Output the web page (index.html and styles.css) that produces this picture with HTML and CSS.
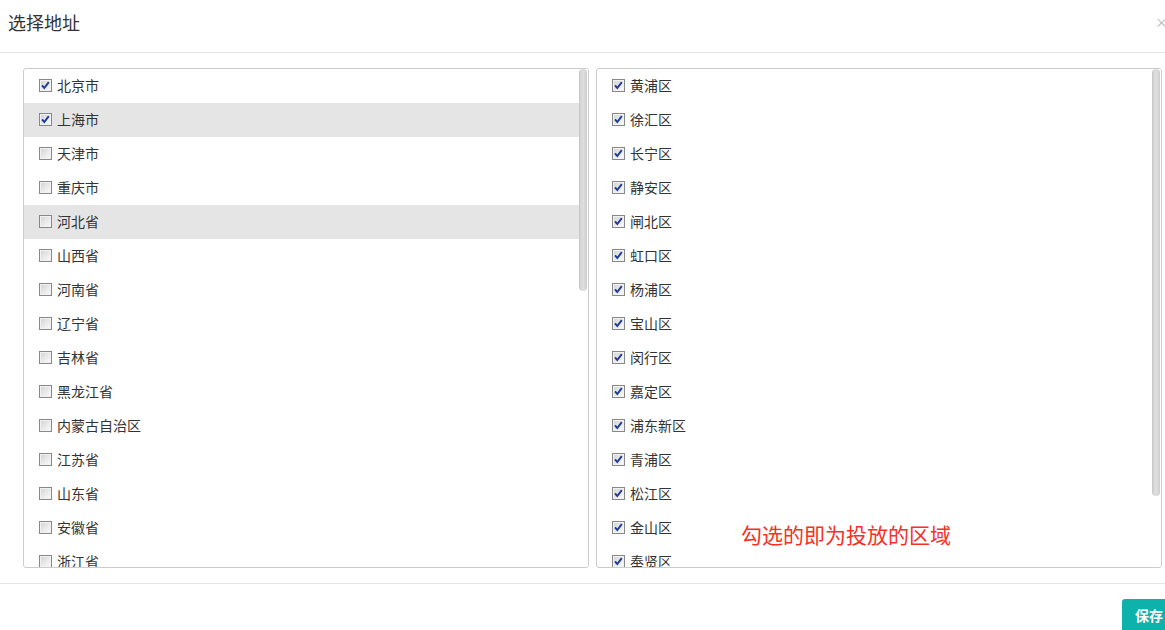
FILE: index.html
```html
<!DOCTYPE html>
<html lang="zh-CN">
<head>
<meta charset="utf-8">
<title>选择地址</title>
<link rel="stylesheet" href="styles.css">
</head>
<body>
<div class="modal">
  <div class="modal-header">
    <h4 class="modal-title">选择地址</h4>
    <span class="close">×</span>
  </div>
  <div class="modal-body">
    <div class="panel">
      <ul class="list">
        <li class="item"><span class="cb checked"></span>北京市</li>
        <li class="item active"><span class="cb checked"></span>上海市</li>
        <li class="item"><span class="cb"></span>天津市</li>
        <li class="item"><span class="cb"></span>重庆市</li>
        <li class="item active"><span class="cb"></span>河北省</li>
        <li class="item"><span class="cb"></span>山西省</li>
        <li class="item"><span class="cb"></span>河南省</li>
        <li class="item"><span class="cb"></span>辽宁省</li>
        <li class="item"><span class="cb"></span>吉林省</li>
        <li class="item"><span class="cb"></span>黑龙江省</li>
        <li class="item"><span class="cb"></span>内蒙古自治区</li>
        <li class="item"><span class="cb"></span>江苏省</li>
        <li class="item"><span class="cb"></span>山东省</li>
        <li class="item"><span class="cb"></span>安徽省</li>
        <li class="item"><span class="cb"></span>浙江省</li>
        <li class="item"><span class="cb"></span>福建省</li>
        <li class="item"><span class="cb"></span>湖北省</li>
        <li class="item"><span class="cb"></span>湖南省</li>
        <li class="item"><span class="cb"></span>广东省</li>
        <li class="item"><span class="cb"></span>广西壮族自治区</li>
      </ul>
      <div class="track"><div class="thumb thumb-left"></div></div>
    </div>
    <div class="panel">
      <ul class="list">
        <li class="item"><span class="cb checked"></span>黄浦区</li>
        <li class="item"><span class="cb checked"></span>徐汇区</li>
        <li class="item"><span class="cb checked"></span>长宁区</li>
        <li class="item"><span class="cb checked"></span>静安区</li>
        <li class="item"><span class="cb checked"></span>闸北区</li>
        <li class="item"><span class="cb checked"></span>虹口区</li>
        <li class="item"><span class="cb checked"></span>杨浦区</li>
        <li class="item"><span class="cb checked"></span>宝山区</li>
        <li class="item"><span class="cb checked"></span>闵行区</li>
        <li class="item"><span class="cb checked"></span>嘉定区</li>
        <li class="item"><span class="cb checked"></span>浦东新区</li>
        <li class="item"><span class="cb checked"></span>青浦区</li>
        <li class="item"><span class="cb checked"></span>松江区</li>
        <li class="item"><span class="cb checked"></span>金山区</li>
        <li class="item"><span class="cb checked"></span>奉贤区</li>
        <li class="item"><span class="cb checked"></span>崇明县</li>
      </ul>
      <div class="track"><div class="thumb thumb-right"></div></div>
      <p class="hint">勾选的即为投放的区域</p>
    </div>
  </div>
  <div class="modal-footer">
    <button class="btn-save">保存</button>
  </div>
</div>
</body>
</html>
```

FILE: styles.css
```css
html, body {
  margin: 0;
  padding: 0;
  overflow: hidden;
  background: #fff;
}

body {
  font-family: "Noto Sans CJK SC", "Noto Sans", "Liberation Sans", sans-serif;
  color: #333;
}

.modal {
  width: 1200px;
  background: #fff;
}

.modal-header {
  height: 52px;
  border-bottom: 1px solid #e5e5e5;
  display: flex;
  align-items: center;
  padding: 0 0 0 8px;
}

.modal-title {
  margin: 0;
  font-size: 18px;
  font-weight: normal;
  color: #333;
  line-height: 20px;
  position: relative;
  top: -4px;
}

.close {
  margin-left: auto;
  margin-right: 32px;
  font-size: 13px;
  color: #b5b5b5;
  line-height: 1;
  position: relative;
  top: -5px;
}

.modal-body {
  display: flex;
  gap: 7px;
  padding: 15px 0 15px 23px;
  border-bottom: 1px solid #e5e5e5;
}

.panel {
  position: relative;
  display: flex;
  width: 566px;
  height: 500px;
  box-sizing: border-box;
  border: 1px solid #ccc;
  border-radius: 3px;
  overflow: hidden;
}

.list {
  flex: 1;
  list-style: none;
  margin: 0;
  padding: 0;
  height: 498px;
  overflow: hidden;
}

.track {
  width: 9px;
  flex: none;
  background: #fff;
}

.thumb {
  width: 8px;
  box-sizing: border-box;
  border-radius: 4px;
  background: linear-gradient(to right, #c4c4c4 0%, #d9d9d9 25%, #dedede 60%, #cbcbcb 100%);
}

.thumb-left {
  height: 222px;
}

.thumb-right {
  height: 427px;
}

.item {
  height: 34px;
  box-sizing: border-box;
  display: flex;
  align-items: center;
  padding-left: 15px;
  padding-bottom: 3px;
  font-size: 14px;
  color: #333;
}

.item.active {
  background: #e5e5e5;
}

.cb {
  width: 13px;
  height: 13px;
  box-sizing: border-box;
  border: 1px solid #888;
  background: linear-gradient(135deg, #d2d2d2 0%, #e8e8e8 50%, #fbfbfb 100%);
  box-shadow: inset 0 0 0 1px #f2f2f2;
  margin-right: 5px;
  flex: none;
  position: relative;
  top: 1px;
}

.cb.checked {
  background:
    url("data:image/svg+xml,%3Csvg xmlns='http://www.w3.org/2000/svg' width='11' height='11' viewBox='0 0 11 11'%3E%3Cpath d='M2 5.3 L4.3 8 L8.8 2.2' fill='none' stroke='%231f3d9a' stroke-width='2'/%3E%3C/svg%3E") center / 11px 11px no-repeat,
    linear-gradient(135deg, #d2d2d2 0%, #e8e8e8 50%, #fbfbfb 100%);
}

.hint {
  position: absolute;
  left: 144px;
  top: 451px;
  margin: 0;
  font-size: 21px;
  line-height: 28px;
  color: #f5311f;
}

.modal-footer {
  display: flex;
  justify-content: flex-end;
  padding: 15px 18px;
}

.btn-save {
  width: 60px;
  height: 34px;
  border: none;
  border-radius: 3px;
  background: #0db2ab;
  color: #fff;
  font-family: "Noto Sans CJK SC", "Noto Sans", sans-serif;
  font-size: 14px;
  font-weight: bold;
  text-align: left;
  padding: 0 0 3px 13px;
}
```
